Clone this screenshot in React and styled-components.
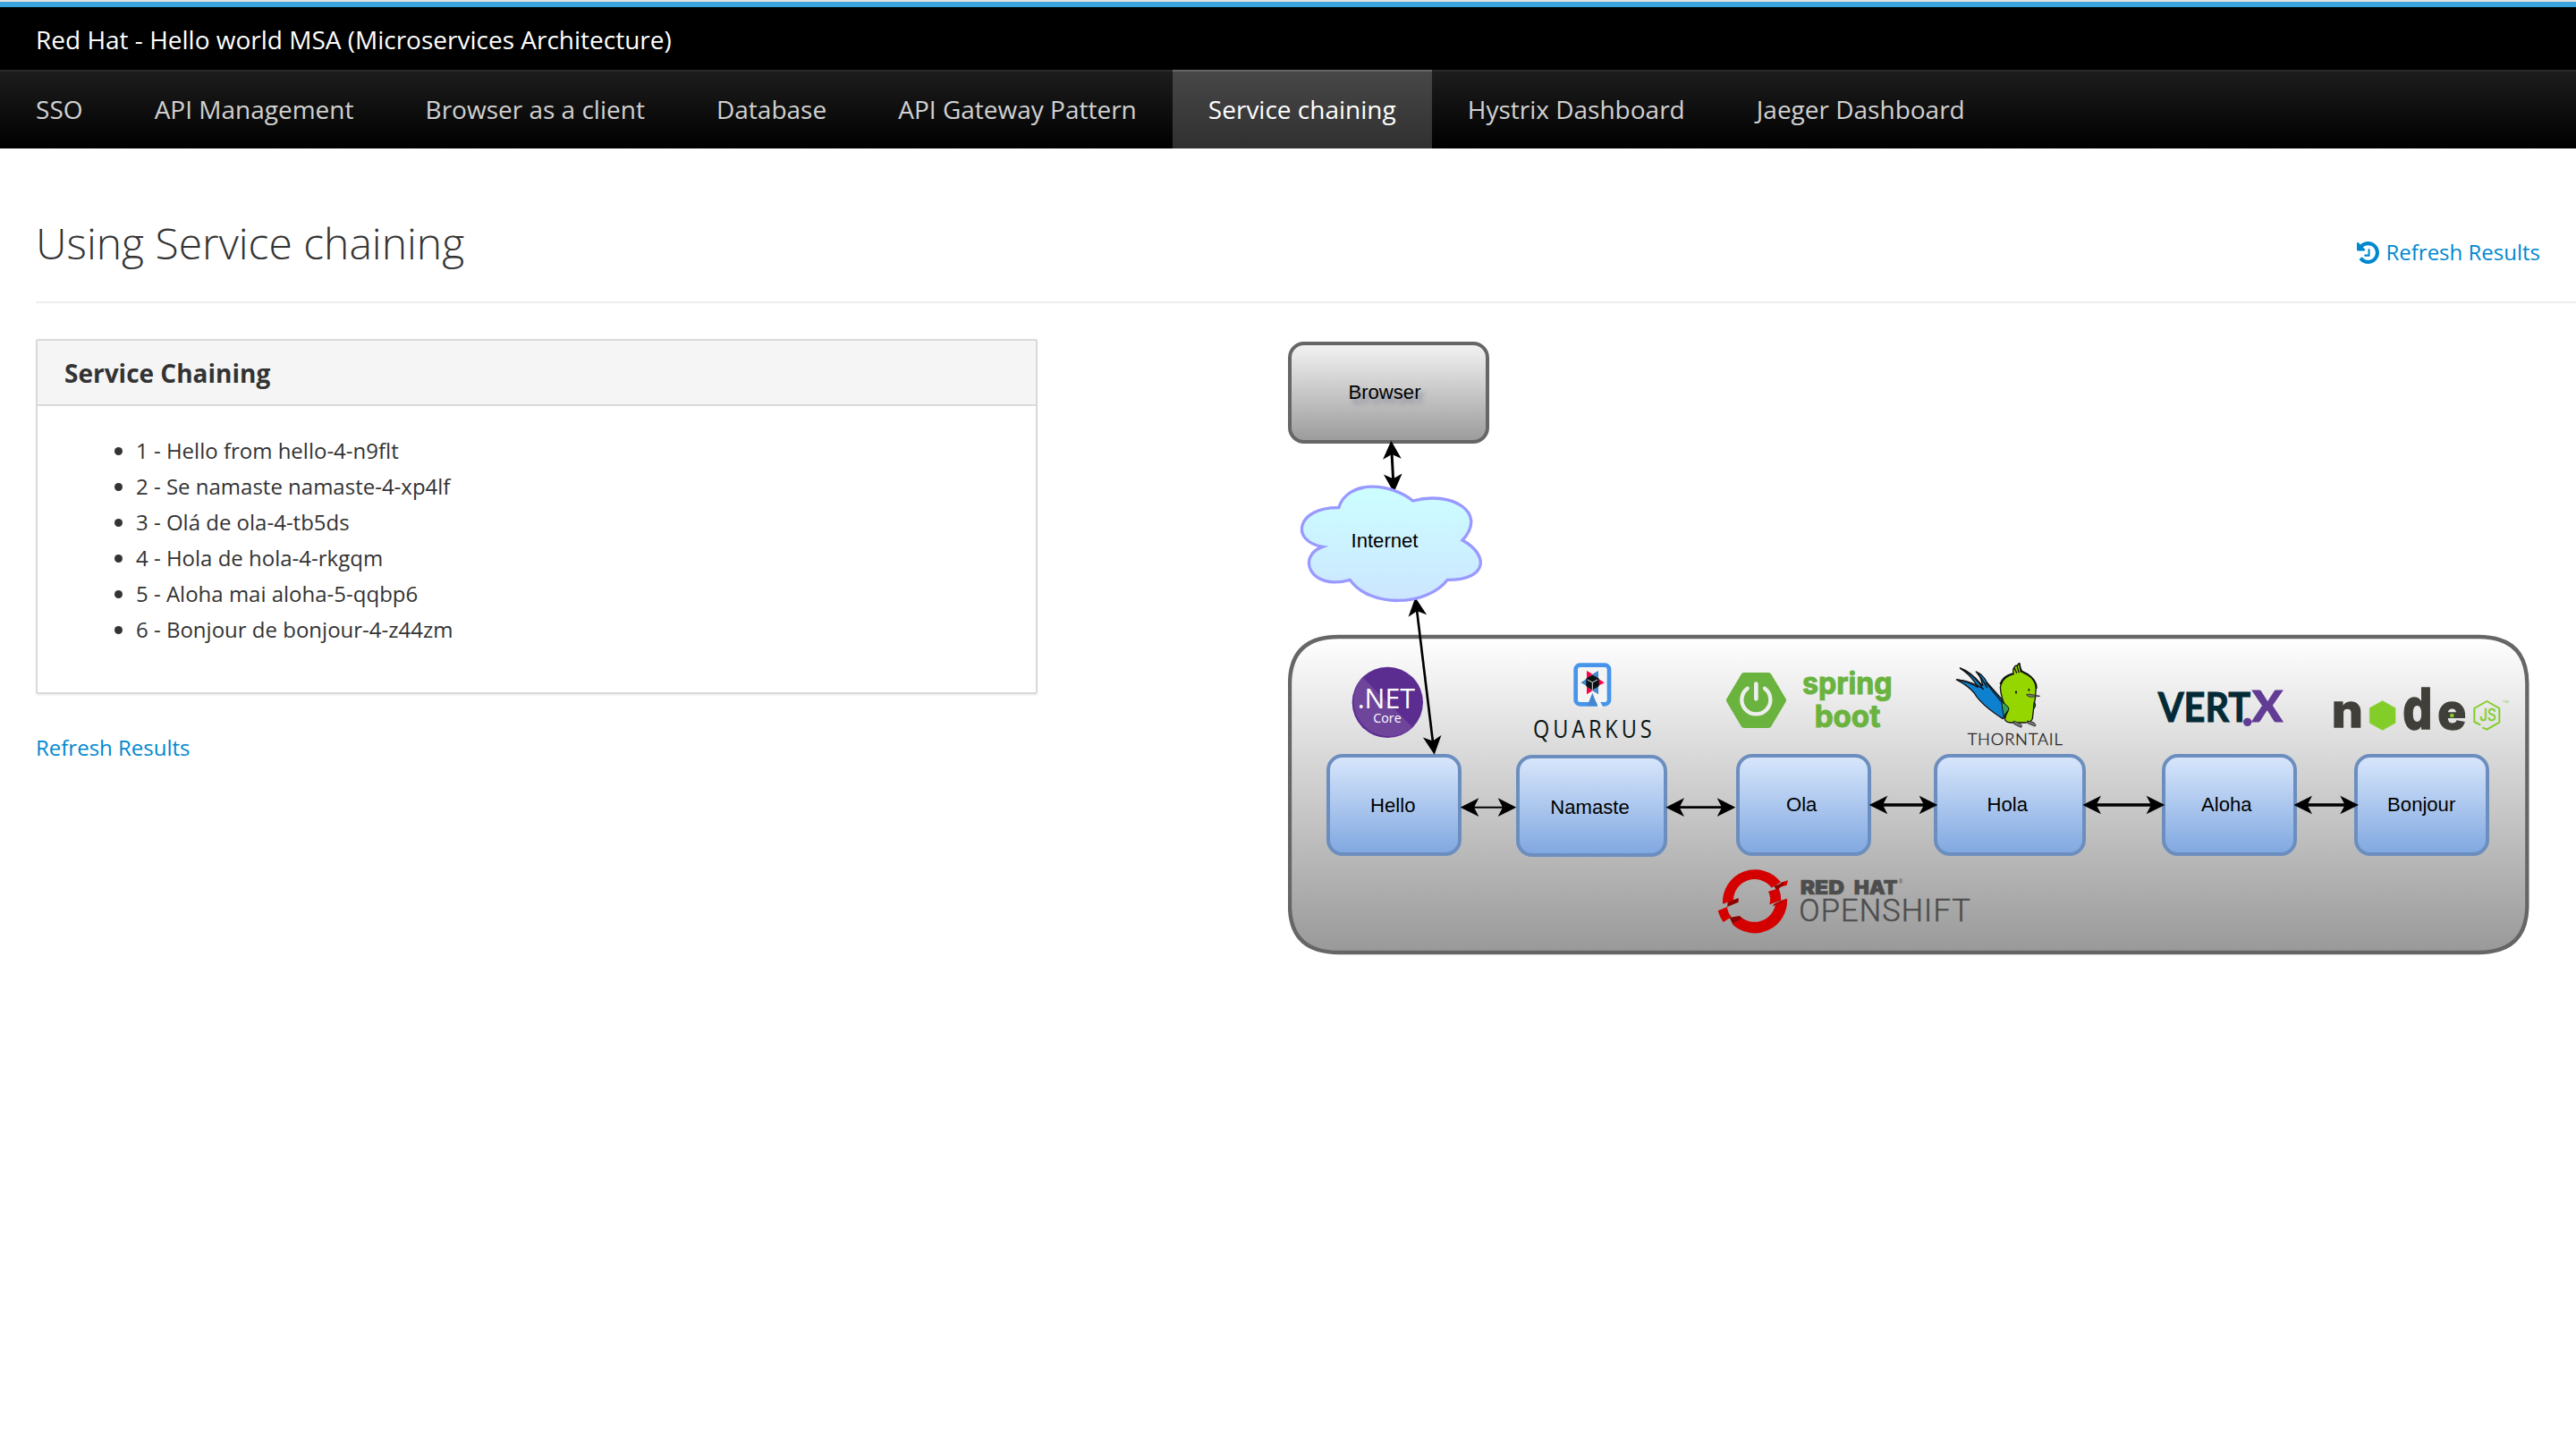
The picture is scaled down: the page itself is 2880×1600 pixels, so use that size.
import React from "react";
import styled, { createGlobalStyle } from "styled-components";

const GlobalStyle = createGlobalStyle`
  * { box-sizing: border-box; }
  body {
    margin: 0;
    background: #fff;
    color: #333;
    font: 24px/40px "Open Sans", "Noto Sans", sans-serif;
  }
`;

const Header = styled.header`
  border-top: 2px solid #e2e2e0;
`;

const Brand = styled.div`
  height: 76px;
  padding: 8px 40px 0;
  border-top: 6px solid #39a5dc;
  background: #000;
  color: #fff;
  font-size: 28px;
  line-height: 56px;
`;

const Nav = styled.nav`
  display: flex;
  height: 88px;
  border-top: 2px solid #292929;
  background: linear-gradient(#1d1d1d, #000);
`;

const NavItem = styled.a`
  height: 88px;
  margin-top: -2px;
  padding: 14px 40.06px 0;
  border-top: 2px solid ${(p) => (p.$active ? "#666" : "transparent")};
  background: ${(p) => (p.$active ? "linear-gradient(#474747, #303030)" : "none")};
  color: ${(p) => (p.$active ? "#fff" : "#d1d1d1")};
  font-size: 28px;
  line-height: 56px;
  white-space: nowrap;
`;

const Page = styled.main`
  padding-left: 40px;
`;

const TitleBar = styled.div`
  display: flex;
  justify-content: space-between;
  align-items: flex-start;
  height: 173px;
  padding: 79px 40px 0 0;
  border-bottom: 2px solid #eee;
`;

const Title = styled.h1`
  margin: 0;
  font-size: 48px;
  font-weight: 300;
  line-height: 54px;
`;

const Link = styled.a`
  display: flex;
  align-items: center;
  gap: 7px;
  color: #0088ce;
`;

const RefreshLink = styled(Link)`
  margin-top: 17px;
`;

const Columns = styled.div`
  display: flex;
  gap: 280px;
  padding-top: 40px;
`;

const Results = styled.section`
  width: 1120px;
`;

const Panel = styled.div`
  margin-bottom: 40px;
  border: 2px solid #dadada;
  border-radius: 2px;
  box-shadow: 0 2px 2px rgba(3, 3, 3, 0.05);
`;

const PanelHeading = styled.h3`
  margin: 0;
  padding: 21px 30px 19px;
  border-bottom: 2px solid #dadada;
  background: #f5f5f5;
  font-size: 28px;
  font-weight: 700;
  line-height: 31px;
`;

const PanelBody = styled.div`
  padding: 30px 30px 50px;
`;

const Greetings = styled.ul`
  margin: 0;
  padding-left: 80px;
`;

const Diagram = styled.section`
  position: relative;
  width: 1400px;
  height: 700px;
  margin-top: 1px;
  font-family: "Liberation Sans", Arial, sans-serif;
`;

const Layer = styled.svg`
  position: absolute;
  inset: 0;
  width: 1400px;
  height: 700px;
`;

const Node = styled.div`
  position: absolute;
  left: ${(p) => p.$x}px;
  top: ${(p) => p.$y}px;
  width: ${(p) => p.$w}px;
  height: 114px;
  display: flex;
  align-items: center;
  justify-content: center;
  border: 4px solid ${(p) => (p.$gray ? "#666" : "#6c8ebf")};
  border-radius: 18px;
  background: ${(p) =>
    p.$gray ? "linear-gradient(#f5f5f5, #999)" : "linear-gradient(#dae8fc, #7ea6e0)"};
  background-origin: border-box;
`;

const NodeLabel = styled.span`
  margin: ${(p) => p.$dy * 2 || 0}px 0 0 ${(p) => p.$dx * 2 || 0}px;
  color: #000;
  font-size: 22.1px;
  line-height: 26px;
  text-shadow: ${(p) => (p.$shadow ? "4px 5px 5px rgba(40, 50, 90, 0.35)" : "none")};
`;

const navItems = [
  "SSO",
  "API Management",
  "Browser as a client",
  "Database",
  "API Gateway Pattern",
  "Service chaining",
  "Hystrix Dashboard",
  "Jaeger Dashboard",
];

const greetings = [
  "1 - Hello from hello-4-n9flt",
  "2 - Se namaste namaste-4-xp4lf",
  "3 - Olá de ola-4-tb5ds",
  "4 - Hola de hola-4-rkgqm",
  "5 - Aloha mai aloha-5-qqbp6",
  "6 - Bonjour de bonjour-4-z44zm",
];

const nodes = [
  { label: "Browser", x: 0, y: 2, w: 225, dx: -4.5, dy: 0, gray: true },
  { label: "Hello", x: 43.3, y: 463, w: 151, dx: -1.5, dy: 1 },
  { label: "Namaste", x: 255, y: 464, w: 169, dx: -2, dy: 2 },
  { label: "Ola", x: 501.4, y: 462.5, w: 151, dx: -2.7, dy: 0.5 },
  { label: "Hola", x: 722.4, y: 462.5, w: 169.3, dx: -2.7, dy: 0.5 },
  { label: "Aloha", x: 977, y: 462.5, w: 150.7, dx: -3, dy: 0.5 },
  { label: "Bonjour", x: 1192.4, y: 462.5, w: 151, dx: -0.7, dy: 0.5 },
];

/* Arrow end points, in thirds of a pixel from the diagram's origin. */
const arrows = [
  { from: [406, -622], to: [415, -448], width: 9 },
  { from: [487, -96], to: [551, 431], width: 8 },
  { from: [638, 608], to: [826, 608], width: 6 },
  { from: [1327, 608], to: [1561, 608], width: 8 },
  { from: [2009, 600], to: [2239, 600], width: 10 },
  { from: [2725, 600], to: [3001, 600], width: 10 },
  { from: [3433, 600], to: [3651, 600], width: 10 },
];

const VIEW = "60 -960 4200 2100";

function Arrow({ from, to, width }) {
  const dx = to[0] - from[0];
  const dy = to[1] - from[1];
  const length = Math.hypot(dx, dy);
  const angle = (Math.atan2(dy, dx) * 180) / Math.PI;
  return (
    <g transform={`translate(${from[0]} ${from[1]}) rotate(${angle})`}>
      <path d={`M45 0H${length - 45}`} stroke="#000" strokeWidth={width} />
      <path d="M0 0L62-31L46 0L62 31Z" />
      <path d={`M${length} 0l-62-31l16 31l-16 31Z`} />
    </g>
  );
}

function Cloud() {
  return (
    <path
      transform="translate(-2 -1021)"
      d="M232 624C90 622 68 736 178 755C90 785 134 905 270 866C335 960 527 957 597 866C735 866 735 781 647 733C735 638 608 566 481 601C406 540 263 528 232 624Z"
      fill="url(#cloud)"
      stroke="#9999ff"
      strokeWidth="10"
      strokeMiterlimit="10"
    />
  );
}

function DotNetLogo() {
  return (
    <g>
      <circle cx="394" cy="256" r="119" fill="#5c2d91" />
      <path d="M310 172A119 119 0 0 0 478 340Z" fill="#6f459c" />
      <g fill="#fff" fontFamily="Open Sans, Noto Sans, sans-serif">
        <text x="293" y="276" fontSize="94" textLength="193" lengthAdjust="spacingAndGlyphs">.NET</text>
        <text x="346" y="323" fontSize="43" textLength="94" lengthAdjust="spacingAndGlyphs">Core</text>
      </g>
    </g>
  );
}

function QuarkusLogo() {
  return (
    <g>
      <rect x="1025" y="131" width="112" height="131" rx="14" fill="#f4f4f4" stroke="#4695eb" strokeWidth="14" />
      <path d="M1088 236L1100 272L1117 272L1106 252Z" fill="#f4f4f4" />
      <path d="M1081 224L1064 268H1098Z" fill="#4486cf" />
      <path d="M1081 161L1062 150V178ZM1100 176V201L1121 190ZM1062 201V229L1081 217Z" fill="#ff004a" />
      <path d="M1081 161L1101 150V178ZM1062 176V201L1042 190ZM1101 201V229L1081 217Z" fill="#4486cf" />
      <path d="M1081 163L1103 176V202L1081 215L1060 202V176Z" fill="#091313" />
      <path d="M1064 180L1081 189L1098 180M1081 189V214" fill="none" stroke="#ddd" strokeWidth="3" />
      <text transform="translate(882 375) scale(0.85 1)" fontSize="83" fill="#091313" fontFamily="Open Sans, Noto Sans, sans-serif" textLength="468" lengthAdjust="spacing">QUARKUS</text>
    </g>
  );
}

function SpringBootLogo() {
  return (
    <g transform="translate(1380 0)">
      <path d="M209 166H292L341 249L292 332H209L160 249Z" fill="#6ab33e" stroke="#6ab33e" strokeWidth="20" strokeLinejoin="round" />
      <path d="M221 209A48 48 0 1 0 279 209" fill="none" stroke="#eee" strokeWidth="13" strokeLinecap="round" />
      <path d="M250 194V244" stroke="#eee" strokeWidth="14" strokeLinecap="round" />
      <g fill="#6ab33e" stroke="#6ab33e" strokeWidth="3" fontFamily="Inter, Open Sans, sans-serif" fontWeight="700" fontSize="102">
        <text x="405" y="227" textLength="302" lengthAdjust="spacingAndGlyphs">spring</text>
        <text x="446" y="338" textLength="221" lengthAdjust="spacingAndGlyphs">boot</text>
      </g>
    </g>
  );
}

function ThorntailLogo() {
  return (
    <g>
      <g transform="translate(2280 105)" strokeLinejoin="round" strokeLinecap="round">
        <path d="M178 206Q105 160 82 120Q60 94 22 75Q50 76 94 100Q70 58 35 37Q75 52 106 92Q112 98 108 86Q103 63 88 48Q112 58 124 84L172 138L190 190Z" fill="#0d80cf" stroke="#111" strokeWidth="4" />
        <path d="M34 36Q75 50 107 99M24 75Q75 80 112 106M90 50Q108 70 124 101M122 86L170 146" fill="none" stroke="#111" strokeWidth="4" />
        <path d="M214 56Q209 40 216 34Q219 25 226 28Q232 16 234 22Q238 48 249 53Q287 67 289 102Q287 140 281 170L277 205Q273 219 252 219H207Q189 220 184 208Q187 190 195 180Q171 140 169 101Q174 67 214 56Z" fill="#95d600" stroke="#111" strokeWidth="4" />
        <path d="M170 88Q178 64 208 55M240 46Q290 68 290 103" fill="none" stroke="#111" strokeWidth="6" />
        <path d="M216 35L224 52M225 28L231 50M233 20L238 49" fill="none" stroke="#111" strokeWidth="4" />
        <path d="M174 150Q196 161 198 174L181 197Z" fill="#36a058" stroke="#111" strokeWidth="3" />
        <path d="M283 151Q293 160 281 173Z" fill="#36702b" stroke="#111" strokeWidth="3" />
        <path d="M258 125Q262 121 277 125L302 130L274 133Q259 133 258 125Z" fill="#777" stroke="#111" strokeWidth="2" />
        <ellipse cx="222" cy="117" rx="3" ry="5" fill="#111" />
        <ellipse cx="265" cy="109" rx="2.5" ry="5" fill="#111" />
        <path d="M215 214L235 221Q246 232 238 235L216 224ZM261 213L282 219Q292 229 285 231L263 222Z" fill="#777" stroke="#333" strokeWidth="3" />
      </g>
      <text x="2339" y="400" fontSize="55" fill="#222" stroke="#222" strokeWidth="1.2" fontFamily="Lato, Open Sans, sans-serif" fontWeight="300" textLength="318" lengthAdjust="spacing">THORNTAIL</text>
    </g>
  );
}

function VertxLogo() {
  return (
    <g transform="translate(2760 0)" fontFamily="Lato, Open Sans, sans-serif" fontWeight="700" fontSize="140">
      <text x="218" y="321" fill="#022b37" stroke="#022b37" strokeWidth="3" textLength="311" lengthAdjust="spacingAndGlyphs">VERT</text>
      <circle cx="518" cy="322" r="14" fill="#623c94" />
      <text x="533" y="321" fill="#623c94" stroke="#623c94" strokeWidth="3" fontWeight="900" textLength="103" lengthAdjust="spacingAndGlyphs">X</text>
    </g>
  );
}

function NodeJsLogo() {
  return (
    <g transform="translate(2760 0)" fontFamily="Inter, Open Sans, sans-serif">
      <g fill="#403f3a" stroke="#403f3a" strokeWidth="4" fontWeight="800">
        <text x="801" y="338" fontSize="154" textLength="104" lengthAdjust="spacingAndGlyphs">n</text>
        <text x="1039" y="345" fontSize="190" textLength="99" lengthAdjust="spacingAndGlyphs">d</text>
        <text x="1156" y="345" fontSize="164" textLength="96" lengthAdjust="spacingAndGlyphs">e</text>
      </g>
      <path d="M971 251L1014 275V325L971 349L928 325V275Z" fill="#83cd29" stroke="#83cd29" strokeWidth="2" strokeLinejoin="round" />
      <circle cx="1204" cy="300" r="7" fill="#83cd29" />
      <path d="M1300 332L1279 321V276L1321 252L1363 276V323L1321 347L1306 340" fill="none" stroke="#83cd29" strokeWidth="6" strokeLinejoin="round" />
      <text x="1297" y="318" fontSize="54" fill="#83cd29" stroke="#83cd29" strokeWidth="1.5" textLength="56" lengthAdjust="spacingAndGlyphs">JS</text>
      <text x="1375" y="259" fontSize="12" fill="#83cd29" textLength="19" lengthAdjust="spacingAndGlyphs">TM</text>
    </g>
  );
}

function OpenShiftLogo() {
  return (
    <g>
      <g transform="translate(1485 792)" fill="#d40000">
        <path d="M33 140A109 109 0 0 1 228 67L197 86A71 71 0 0 0 69 128L50 134Z" />
        <path d="M249 122A109 109 0 0 1 64 207L98 187A71 71 0 0 0 210 140Z" />
        <path d="M186 98L221 88Q229 108 229 128L190 142Q196 118 186 98Z" />
        <path d="M17 163L48 150Q50 172 62 184L35 201Q22 184 17 163Z" />
        <path d="M228 68L252 61L248 77L222 85Z" />
        <path d="M50 134L86 120V134L48 150Z" fill="#8c0000" />
        <path d="M205 80L243 66L222 89L212 92Z" fill="#8c0000" />
        <path d="M249 122L229 129L205 140L200 148L226 138Z" fill="#a80000" />
        <path d="M56 186L90 180L98 188L66 206Z" fill="#8c0000" />
      </g>
      <g fill="#4d4d4d">
        <g fontFamily="Inter, Open Sans, sans-serif" fontWeight="900" fontSize="66" stroke="#4d4d4d" strokeWidth="2">
          <text x="1778" y="899" textLength="148" lengthAdjust="spacingAndGlyphs">RED</text>
          <text x="1958" y="899" textLength="146" lengthAdjust="spacingAndGlyphs">HAT</text>
        </g>
        <text x="2108" y="864" fontSize="19">®</text>
        <text x="1774" y="989" fontSize="103" fontFamily="Roboto, Open Sans, sans-serif" fontWeight="300" stroke="#4d4d4d" strokeWidth="1.5" textLength="574" lengthAdjust="spacing">OPENSHIFT</text>
      </g>
    </g>
  );
}

function HistoryIcon() {
  return (
    <svg width="25" height="25" viewBox="0 -128 1536 1536" fill="currentColor" aria-hidden="true">
      <path d="M1536 640q0 156-61 298t-164 245-245 164-298 61q-172 0-327-72.5t-264-204.5q-7-10-6.500-22.500t8.500-20.500l137-138q10-9 25-9 16 2 23 12 73 95 179 147t225 52q104 0 198.500-40.500t163.500-109.500 109.500-163.500 40.500-198.500-40.500-198.500-109.500-163.500-163.500-109.500-198.500-40.500q-98 0-188 35.500t-160 101.500l137 138q31 30 14 69-17 40-59 40h-448q-26 0-45-19t-19-45v-448q0-42 40-59 39-17 69 14l130 129q107-101 244.500-156.500t284.500-55.500q156 0 298 61t245 164 164 245 61 298zM896 416v448q0 14-9 23t-23 9h-320q-14 0-23-9t-9-23v-64q0-14 9-23t23-9h224v-352q0-14 9-23t23-9h64q14 0 23 9t9 23z" />
    </svg>
  );
}

function ServiceDiagram() {
  return (
    <Diagram>
      <Layer viewBox={VIEW}>
        <defs>
          <linearGradient id="cluster" x1="0" y1="0" x2="0" y2="1">
            <stop offset="0" stopColor="#fff" />
            <stop offset="1" stopColor="#999" />
          </linearGradient>
          <linearGradient id="cloud" x1="0" y1="0" x2="0" y2="1">
            <stop offset="0" stopColor="#ccffff" />
            <stop offset="1" stopColor="#cce5ff" />
          </linearGradient>
        </defs>
        <path
          d="M66 195Q66 36 230 36H4052Q4216 36 4216 195V936Q4216 1095 4052 1095H230Q66 1095 66 936Z"
          fill="url(#cluster)"
          stroke="#666"
          strokeWidth="13"
        />
        <DotNetLogo />
        <QuarkusLogo />
        <SpringBootLogo />
        <ThorntailLogo />
        <VertxLogo />
        <NodeJsLogo />
        <OpenShiftLogo />
      </Layer>
      {nodes.map((n) => (
        <Node key={n.label} $x={n.x} $y={n.y} $w={n.w} $gray={n.gray}>
          <NodeLabel $dx={n.dx} $dy={n.dy} $shadow={n.gray}>{n.label}</NodeLabel>
        </Node>
      ))}
      <Layer viewBox={VIEW}>
        {arrows.map((a) => (
          <Arrow key={a.from.join()} {...a} />
        ))}
        <Cloud />
        <text x="384" y="-265" textAnchor="middle" fontSize="66.300">Internet</text>
      </Layer>
    </Diagram>
  );
}

export default function App() {
  return (
    <>
      <GlobalStyle />
      <Header>
        <Brand>Red Hat - Hello world MSA (Microservices Architecture)</Brand>
        <Nav>
          {navItems.map((item) => (
            <NavItem key={item} $active={item === "Service chaining"}>{item}</NavItem>
          ))}
        </Nav>
      </Header>
      <Page>
        <TitleBar>
          <Title>Using Service chaining</Title>
          <RefreshLink>
            <HistoryIcon />
            Refresh Results
          </RefreshLink>
        </TitleBar>
        <Columns>
          <Results>
            <Panel>
              <PanelHeading>Service Chaining</PanelHeading>
              <PanelBody>
                <Greetings>
                  {greetings.map((g) => (
                    <li key={g}>{g}</li>
                  ))}
                </Greetings>
              </PanelBody>
            </Panel>
            <Link>Refresh Results</Link>
          </Results>
          <ServiceDiagram />
        </Columns>
      </Page>
    </>
  );
}
